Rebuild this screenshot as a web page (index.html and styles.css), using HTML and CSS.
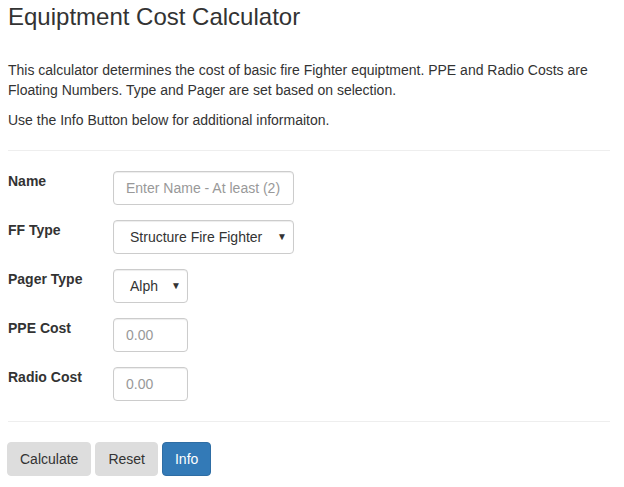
FILE: index.html
```html
<!DOCTYPE html>
<html>
<head>
<meta charset="utf-8">
<link rel="stylesheet" href="styles.css">
</head>
<body>
<div class="page">
  <h3 class="title">Equiptment Cost Calculator</h3>
  <p class="intro">This calculator determines the cost of basic fire Fighter equiptment. PPE and Radio Costs are Floating Numbers. Type and Pager are set based on selection.</p>
  <p class="intro">Use the Info Button below for additional informaiton.</p>
  <hr class="rule">
  <form class="form">
    <div class="row">
      <label class="label">Name</label>
      <input class="field wide" type="text" placeholder="Enter Name - At least (2)">
    </div>
    <div class="row">
      <label class="label">FF Type</label>
      <div class="select wide"><span>Structure Fire Fighter</span><span class="arrow">▼</span></div>
    </div>
    <div class="row">
      <label class="label">Pager Type</label>
      <div class="select narrow"><span>Alph</span><span class="arrow">▼</span></div>
    </div>
    <div class="row">
      <label class="label">PPE Cost</label>
      <input class="field narrow" type="text" placeholder="0.00">
    </div>
    <div class="row">
      <label class="label">Radio Cost</label>
      <input class="field narrow" type="text" placeholder="0.00">
    </div>
  </form>
  <hr class="rule">
  <div class="buttons">
    <button class="btn">Calculate</button>
    <button class="btn">Reset</button>
    <button class="btn primary">Info</button>
  </div>
</div>
</body>
</html>
```
FILE: styles.css
```css
* { box-sizing: border-box; }
body {
  margin: 0;
  font-family: "Liberation Sans", Arial, sans-serif;
  font-size: 14px;
  line-height: 20px;
  color: #333;
  background: #fff;
}
.page {
  padding: 0 14px 0 8px;
}
.title {
  font-size: 24px;
  font-weight: 500;
  line-height: 26px;
  margin: 4px 0 0;
  padding-bottom: 0;
}
.intro {
  margin: 10px 0;
}
.title + .intro { margin-top: 30px; }
.rule {
  border: 0;
  border-top: 1px solid #eee;
  margin: 20px 0;
}
.form { margin: 0; }
.row {
  display: flex;
  align-items: flex-start;
  margin-bottom: 15px;
}
.row:last-child { margin-bottom: 0; }
.label {
  width: 105px;
  flex: none;
  font-weight: bold;
  padding-top: 0;
}
.field, .select {
  height: 34px;
  border: 1px solid #ccc;
  border-radius: 4px;
  background: #fff;
  font-family: "Liberation Sans", Arial, sans-serif;
  font-size: 14px;
  color: #555;
  box-shadow: inset 0 1px 1px rgba(0,0,0,.075);
}
.field {
  padding: 6px 12px;
  outline: none;
}
.field::placeholder { color: #999; }
.wide { width: 181px; }
.narrow { width: 75px; }
.select {
  display: flex;
  align-items: center;
  justify-content: space-between;
  padding: 0 6px 0 16px;
  color: #333;
}
.arrow {
  font-size: 10px;
  color: #333;
  line-height: 1;
}
.buttons {
  display: flex;
  gap: 4px;
  margin-left: -1px;
}
.btn {
  height: 34px;
  padding: 6px 12px;
  border: 1px solid #ddd;
  border-radius: 4px;
  background: #ddd;
  color: #333;
  font-family: "Liberation Sans", Arial, sans-serif;
  font-size: 14px;
  line-height: 20px;
}
.btn.primary {
  background: #337ab7;
  border-color: #2e6da4;
  color: #fff;
}
```
